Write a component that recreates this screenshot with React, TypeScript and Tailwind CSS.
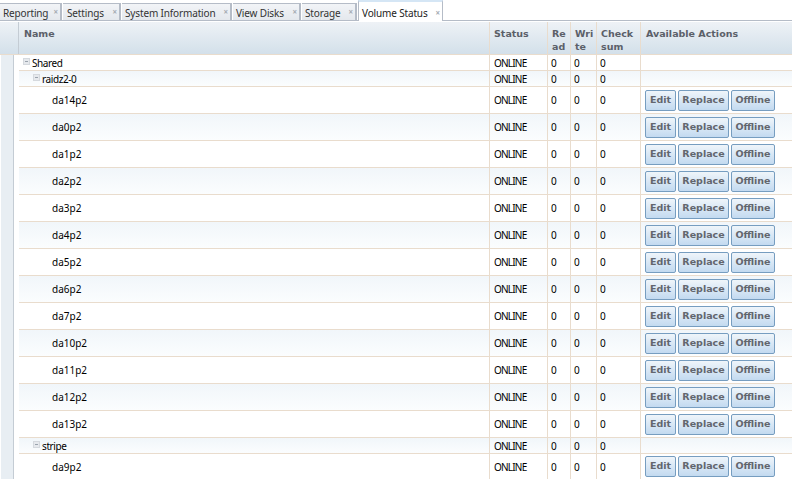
import React from "react";

const TABS = [
  { label: "Reporting", w: "w-[62px] pl-[3px]" },
  { label: "Settings", w: "w-[58px] pl-[4px]" },
  { label: "System Information", w: "w-[110px] pl-[3px]" },
  { label: "View Disks", w: "w-[68px] pl-[3px]" },
  { label: "Storage", w: "w-[55px] pl-[3px]" },
];

const COLS = "grid grid-cols-[471px_58px_23px_26px_44px_151px]";
const DISKS = ["da14p2", "da0p2", "da1p2", "da2p2", "da3p2", "da4p2", "da5p2", "da6p2", "da7p2", "da10p2", "da11p2", "da12p2", "da13p2"];

function Tab({ label, w }: { label: string; w: string }) {
  return (
    <div className={`${w} h-[17px] mr-px pt-[2px] flex items-center justify-between pr-[2px] tracking-[-0.15px] bg-gradient-to-b from-[#f2f4f7] to-[#e4e8ed] border-r-2 border-t border-[#b5bcc7] text-[#333]`}>
      <span>{label}</span>
      <span className="text-[8px] text-[#a5abb3] font-bold -mt-[2px]">×</span>
    </div>
  );
}

function Expand() {
  return (
    <span className="w-[7px] h-[7px] mr-[2px] -mt-[4px] flex items-center justify-center bg-[#e6e9ed] border border-[#d5d9de]">
      <span className="w-[3px] h-px bg-[#9aa3ad]" />
    </span>
  );
}

function Cell({ children, last, className = "" }: { children?: React.ReactNode; last?: boolean; className?: string }) {
  return <div className={`flex items-center h-full ${last ? "" : "pt-px border-r border-[#e9dccd]"} ${className}`}>{children}</div>;
}

function Action({ label, w }: { label: string; w: string }) {
  return (
    <button className={`${w} h-[21px] rounded-[2px] border border-[#769dc0] bg-gradient-to-b from-[#eff5fa] to-[#c3daf0] text-[9.5px] font-bold text-[#62666e] font-['DejaVu_Sans',sans-serif] flex items-center justify-center`}>
      {label}
    </button>
  );
}

function Row({ name, indent, tint, actions, h }: { name: string; indent: string; tint?: boolean; actions?: boolean; h: string }) {
  return (
    <div className={`${COLS} ${h} border-b border-[#e9dccd] ${tint ? "bg-gradient-to-b from-[#f1f6fa] to-[#fbfdfe]" : "bg-white"}`}>
      <Cell className={indent}>
        {actions ? name : (<><Expand /><span className="tracking-[-0.4px]">{name}</span></>)}
      </Cell>
      <Cell className="pl-1 tracking-[-0.8px]">ONLINE</Cell>
      <Cell className="pl-[3px]">0</Cell>
      <Cell className="pl-[3px]">0</Cell>
      <Cell className="pl-[3px]">0</Cell>
      <Cell last className="pl-1">
        {actions && (
          <div className="flex gap-[2px]">
            <Action label="Edit" w="w-[31px]" />
            <Action label="Replace" w="w-[51px]" />
            <Action label="Offline" w="w-[44px]" />
          </div>
        )}
      </Cell>
    </div>
  );
}

export default function App() {
  return (
    <div className="w-[792px] h-[488px] overflow-hidden bg-white text-[10px] text-black font-['Noto_Sans',sans-serif]">
      {/* tabs */}
      <div className="h-[21px] flex items-end border-b border-[#b5bcc7]">
        {TABS.map(t => <Tab key={t.label} {...t} />)}
        <div className="w-[85px] h-[21px] -mb-px flex items-center justify-between pl-[3px] pr-[2px] pt-[4px] tracking-[-0.15px] bg-white border-x border-[#b5bcc7] border-t-2 border-t-[#d5e6f5] text-[#222]">
          <span>Volume Status</span>
          <span className="text-[8px] text-[#a5abb3] font-bold -mt-[2px]">×</span>
        </div>
      </div>

      {/* header */}
      <div className="mt-px h-[33px] flex bg-gradient-to-b from-[#eef2f6] to-[#d3e0ea] border-b border-[#e9dccd] text-[9.5px] font-bold text-[#5b6069] font-['DejaVu_Sans',sans-serif]">
        <div className="w-[20px] border-r border-[#c4ccd4]" />
        <div className={`${COLS} leading-[13px]`}>
          <div className="pl-[5px] border-r border-[#e9dccd] pt-[5px]">Name</div>
          <div className="pl-1 border-r border-[#e9dccd] pt-[5px]">Status</div>
          <div className="pl-[4px] border-r border-[#e9dccd] pt-[5px]">Re<br />ad</div>
          <div className="pl-[4px] border-r border-[#e9dccd] pt-[5px]">Wri<br />te</div>
          <div className="pl-[4px] border-r border-[#e9dccd] pt-[5px]">Check<br />sum</div>
          <div className="pl-[5px] pt-[5px]">Available Actions</div>
        </div>
      </div>

      {/* body */}
      <div className="flex">
        <div className="w-[13px] ml-px bg-[#e8eef3] border-r border-[#c4ccd4] -mr-px" />
        <div className="ml-[6px]">
          <Row name="Shared" indent="pl-[4px]" h="h-[16px]" />
          <Row name="raidz2-0" indent="pl-[14px]" h="h-[16px]" tint />
          {DISKS.map((d, i) => (
            <Row key={d} name={d} indent="pl-[33px]" h="h-[27px]" actions tint={i % 2 === 1} />
          ))}
          <Row name="stripe" indent="pl-[14px]" h="h-[16px]" tint />
          <div className="[&>div]:border-b-0">
            <Row name="da9p2" indent="pl-[33px]" h="h-[25px]" actions />
          </div>
        </div>
      </div>
    </div>
  );
}
